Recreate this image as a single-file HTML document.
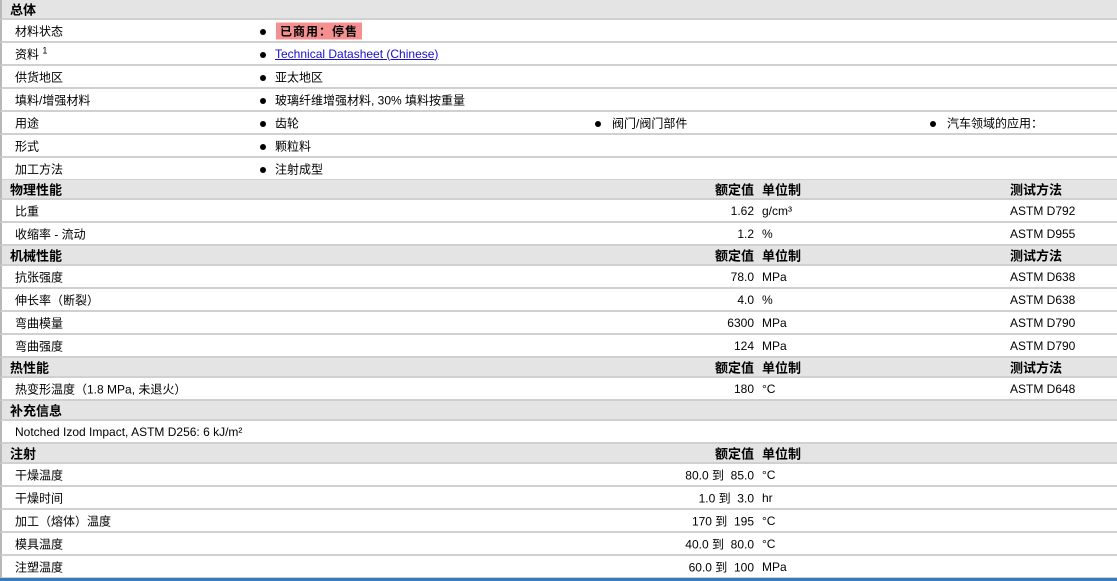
<!DOCTYPE html>
<html><head><meta charset="utf-8"><style>
body{margin:0;width:1117px;height:581px;overflow:hidden;background:#fff;font-family:"Liberation Sans","Noto Sans CJK SC",sans-serif;font-size:12px;color:#000;position:relative}
.r{position:absolute;left:0;width:1117px;box-sizing:border-box;border-bottom:2px solid #d0d0d0;border-left:2px solid #b8b8b8}
.h{background:#e4e4e4;height:20px;font-weight:bold;font-size:13px}
.d{height:23px}
.r span{position:absolute;white-space:nowrap;top:50%;transform:translateY(-50%)}
.lab{left:13px}
.hl{left:8px}
.b{left:258px}.b2{left:593px}.b3{left:928px}
.t{left:273px}.t2{left:610px}.t3{left:945px}
.v{right:363px;text-align:right}
.u{left:760px}
.m{left:1008px}
.dot{display:inline-block;width:6px;height:6px;border-radius:50%;background:#000}
a{color:#1a0dcc;text-decoration:underline}
.tag{background:#f59090;font-weight:bold;padding:0 4px;letter-spacing:1px}
</style></head><body>
<div class="r h" style="top:0"><span class="hl">总体</span></div>
<div class="r d" style="top:20px"><span class="lab">材料状态</span><span class="b"><i class="dot"></i></span><span class="t tag" style="left:274px">已商用：停售</span></div>
<div class="r d" style="top:43px"><span class="lab">资料 <sup style="font-size:9px">1</sup></span><span class="b"><i class="dot"></i></span><span class="t"><a>Technical Datasheet (Chinese)</a></span></div>
<div class="r d" style="top:66px"><span class="lab">供货地区</span><span class="b"><i class="dot"></i></span><span class="t">亚太地区</span></div>
<div class="r d" style="top:89px"><span class="lab">填料/增强材料</span><span class="b"><i class="dot"></i></span><span class="t">玻璃纤维增强材料, 30% 填料按重量</span></div>
<div class="r d" style="top:112px"><span class="lab">用途</span><span class="b"><i class="dot"></i></span><span class="t">齿轮</span><span class="b2"><i class="dot"></i></span><span class="t2">阀门/阀门部件</span><span class="b3"><i class="dot"></i></span><span class="t3">汽车领域的应用：</span></div>
<div class="r d" style="top:135px"><span class="lab">形式</span><span class="b"><i class="dot"></i></span><span class="t">颗粒料</span></div>
<div class="r d" style="top:158px"><span class="lab">加工方法</span><span class="b"><i class="dot"></i></span><span class="t">注射成型</span></div>
<div class="r h" style="top:180px"><span class="hl">物理性能</span><span class="v">额定值</span><span class="u">单位制</span><span class="m">测试方法</span></div>
<div class="r d" style="top:200px"><span class="lab">比重</span><span class="v">1.62</span><span class="u">g/cm³</span><span class="m">ASTM D792</span></div>
<div class="r d" style="top:223px"><span class="lab">收缩率 - 流动</span><span class="v">1.2</span><span class="u">%</span><span class="m">ASTM D955</span></div>
<div class="r h" style="top:246px"><span class="hl">机械性能</span><span class="v">额定值</span><span class="u">单位制</span><span class="m">测试方法</span></div>
<div class="r d" style="top:266px"><span class="lab">抗张强度</span><span class="v">78.0</span><span class="u">MPa</span><span class="m">ASTM D638</span></div>
<div class="r d" style="top:289px"><span class="lab">伸长率（断裂）</span><span class="v">4.0</span><span class="u">%</span><span class="m">ASTM D638</span></div>
<div class="r d" style="top:312px"><span class="lab">弯曲模量</span><span class="v">6300</span><span class="u">MPa</span><span class="m">ASTM D790</span></div>
<div class="r d" style="top:335px"><span class="lab">弯曲强度</span><span class="v">124</span><span class="u">MPa</span><span class="m">ASTM D790</span></div>
<div class="r h" style="top:358px"><span class="hl">热性能</span><span class="v">额定值</span><span class="u">单位制</span><span class="m">测试方法</span></div>
<div class="r d" style="top:378px"><span class="lab">热变形温度（1.8 MPa, 未退火）</span><span class="v">180</span><span class="u">°C</span><span class="m">ASTM D648</span></div>
<div class="r h" style="top:401px"><span class="hl">补充信息</span></div>
<div class="r d" style="top:421px"><span class="lab">Notched Izod Impact, ASTM D256: 6 kJ/m²</span></div>
<div class="r h" style="top:444px"><span class="hl">注射</span><span class="v">额定值</span><span class="u">单位制</span></div>
<div class="r d" style="top:464px"><span class="lab">干燥温度</span><span class="v">80.0 到&nbsp; 85.0</span><span class="u">°C</span></div>
<div class="r d" style="top:487px"><span class="lab">干燥时间</span><span class="v">1.0 到&nbsp; 3.0</span><span class="u">hr</span></div>
<div class="r d" style="top:510px"><span class="lab">加工（熔体）温度</span><span class="v">170 到&nbsp; 195</span><span class="u">°C</span></div>
<div class="r d" style="top:533px"><span class="lab">模具温度</span><span class="v">40.0 到&nbsp; 80.0</span><span class="u">°C</span></div>
<div class="r d" style="top:556px"><span class="lab">注塑温度</span><span class="v">60.0 到&nbsp; 100</span><span class="u">MPa</span></div>
<div style="position:absolute;top:578px;left:0;width:1117px;height:3px;background:#3a7ab8"></div>
</body></html>
